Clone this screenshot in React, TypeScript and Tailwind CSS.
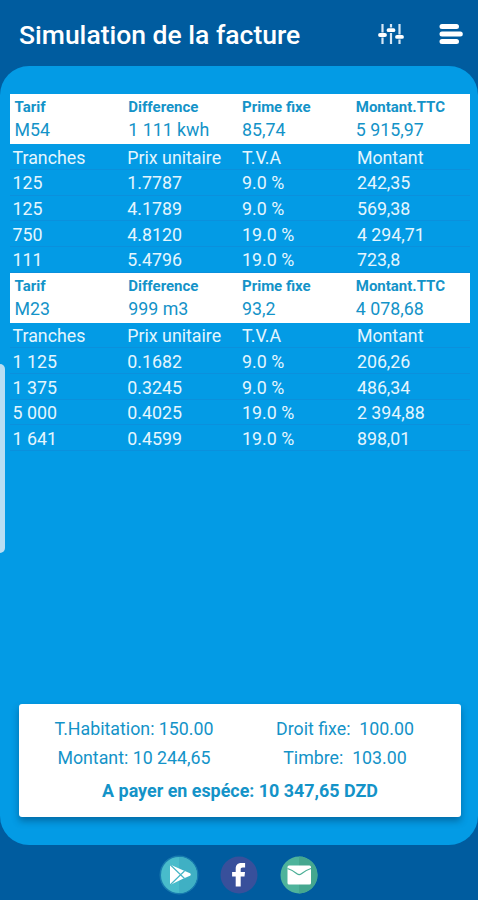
import React from 'react';

interface Tarif {
  name: string;
  difference: string;
  primeFixe: string;
  total: string;
  tranches: string[][];
}

const tarifs: Tarif[] = [
  {
    name: 'M54',
    difference: '1 111 kwh',
    primeFixe: '85,74',
    total: '5 915,97',
    tranches: [
      ['125', '1.7787', '9.0 %', '242,35'],
      ['125', '4.1789', '9.0 %', '569,38'],
      ['750', '4.8120', '19.0 %', '4 294,71'],
      ['111', '5.4796', '19.0 %', '723,8'],
    ],
  },
  {
    name: 'M23',
    difference: '999 m3',
    primeFixe: '93,2',
    total: '4 078,68',
    tranches: [
      ['1 125', '0.1682', '9.0 %', '206,26'],
      ['1 375', '0.3245', '9.0 %', '486,34'],
      ['5 000', '0.4025', '19.0 %', '2 394,88'],
      ['1 641', '0.4599', '19.0 %', '898,01'],
    ],
  },
];

const columns = ['Tranches', 'Prix unitaire', 'T.V.A', 'Montant'];

const SlidersIcon: React.FC = () => (
  <svg className="w-[26px] h-[22px]" viewBox="0 0 26 22" fill="none" stroke="#d5e6f5">
    <path strokeWidth="2.2" d="M4.5 1v8.6M4.5 14.4v6.6M13 1v3.4M13 10v11M21.5 1v10.5M21.5 16.5v4.5" />
    <path strokeWidth="3.8" strokeLinecap="round" stroke="#fff" d="M2 12h5M10.5 7.2h5M19 13.9h5" />
  </svg>
);

const MenuIcon: React.FC = () => (
  <svg className="w-6 h-5" viewBox="0 0 24 20" fill="none" stroke="#fff" strokeWidth="5" strokeLinecap="round">
    <path d="M3 2.5h14.5M3 10h18.3M3 17.5h14.5" />
  </svg>
);

const PlayIcon: React.FC = () => (
  <svg className="w-10 h-10" viewBox="0 0 40 40">
    <circle cx="20" cy="20" r="19.5" fill="#36a5c4" opacity="0.45" />
    <circle cx="20" cy="20" r="18" fill="#48bccb" />
    <path d="M20 2a18 18 0 0 1 0 36z" fill="#3fb0c4" />
    <path d="M11 9.5v20.5l13-6.2 7-3a1.5 1.5 0 0 0 0-2.6l-7-3z" fill="#fff" />
    <path d="M11 9.5l14.5 14M11 30l14.5-14" stroke="#45b5c6" strokeWidth="1.2" fill="none" />
  </svg>
);

const FacebookIcon: React.FC = () => (
  <svg className="w-10 h-10" viewBox="0 0 40 40">
    <circle cx="20" cy="20" r="18.5" fill="#38509b" />
    <path
      d="M16.7 31.5V21.6h-3.6v-4.6h3.6v-3.2c0-3.7 2.1-5.8 5.5-5.8h3.9v4.5h-2.4c-1.5 0-2 .7-2 1.8v2.7h4.3l-.5 4.6h-3.8v9.9z"
      fill="#fff"
    />
  </svg>
);

const MailIcon: React.FC = () => (
  <svg className="w-10 h-10" viewBox="0 0 40 40">
    <circle cx="20" cy="20" r="18.5" fill="#4eb39b" />
    <path d="M20 1.5a18.5 18.5 0 0 1 0 37z" fill="#45a78f" />
    <rect x="8.5" y="10.5" width="23.5" height="19" rx="1.5" fill="#fff" />
    <path d="M8.5 13.5q5 1.5 9.5 5.3 2.2 1.5 4.4 0 4.6-3.8 9.6-5.3" stroke="#4aae96" strokeWidth="1.3" fill="none" />
  </svg>
);

const TarifBlock: React.FC<{ tarif: Tarif }> = ({ tarif }) => {
  const summary = [
    { label: 'Tarif', value: tarif.name },
    { label: 'Difference', value: tarif.difference },
    { label: 'Prime fixe', value: tarif.primeFixe },
    { label: 'Montant.TTC', value: tarif.total },
  ];

  return (
    <section>
      <div className="grid grid-cols-4 h-[50px] bg-white text-[#1493c8] pt-[3px] pl-[5px]">
        {summary.map((item) => (
          <div key={item.label} className="whitespace-nowrap">
            <div className="text-[15px] leading-[21px] font-bold">{item.label}</div>
            <div className="text-[17.8px] leading-[24px]">{item.value}</div>
          </div>
        ))}
      </div>
      {[columns, ...tarif.tranches].map((row, i) => (
        <div
          key={i}
          className="grid grid-cols-[repeat(4,114.8px)] h-[25.7px] pl-[3px] pt-[1.5px] border-b border-[#0b90dc] text-[17.8px] leading-[24px] text-[#e4f6fe]"
        >
          {row.map((cell, j) => (
            <span key={j} className="whitespace-nowrap">
              {cell}
            </span>
          ))}
        </div>
      ))}
    </section>
  );
};

const App: React.FC = () => {
  return (
    <div className="relative flex flex-col w-[478px] h-[900px] overflow-hidden bg-[#005c9f] font-['Roboto',sans-serif]">
      <header className="flex items-center h-[66px] shrink-0 pl-[19px] pr-[15px] pt-[2px]">
        <h1 className="flex-1 pt-[2px] text-[26.5px] font-medium text-white whitespace-nowrap">
          Simulation de la facture
        </h1>
        <div className="flex items-center gap-[35px]">
          <SlidersIcon />
          <MenuIcon />
        </div>
      </header>

      <main className="flex flex-col justify-between h-[779px] shrink-0 rounded-[29px] bg-[#039be5] pt-[28.2px] pb-7">
        <div className="ml-[9.5px] w-[460px]">
          {tarifs.map((tarif) => (
            <TarifBlock key={tarif.name} tarif={tarif} />
          ))}
        </div>

        {/* Totals */}
        <div className="ml-[19px] w-[442px] h-[113px] rounded-[3px] bg-white text-[#1493c8] shadow-[0_4px_7px_rgba(0,50,90,0.45)] pt-[10px]">
          <div className="grid grid-cols-[230px_192px] text-center text-[17.8px] leading-[29px] whitespace-pre">
            <span>T.Habitation: 150.00</span>
            <span>Droit fixe:  100.00</span>
            <span>Montant: 10 244,65</span>
            <span>Timbre:  103.00</span>
          </div>
          <div className="mt-[5px] text-center text-[17.9px] leading-[28px] font-bold">
            A payer en espéce: 10 347,65 DZD
          </div>
        </div>
      </main>

      <footer className="flex justify-center gap-5 h-[55px] shrink-0 pt-[10px]">
        <PlayIcon />
        <FacebookIcon />
        <MailIcon />
      </footer>

      {/* Edge panel handle */}
      <div className="absolute left-0 top-[364px] w-[5px] h-[189px] rounded-r-[5px] bg-[#b9def3]" />
    </div>
  );
};

export default App;
